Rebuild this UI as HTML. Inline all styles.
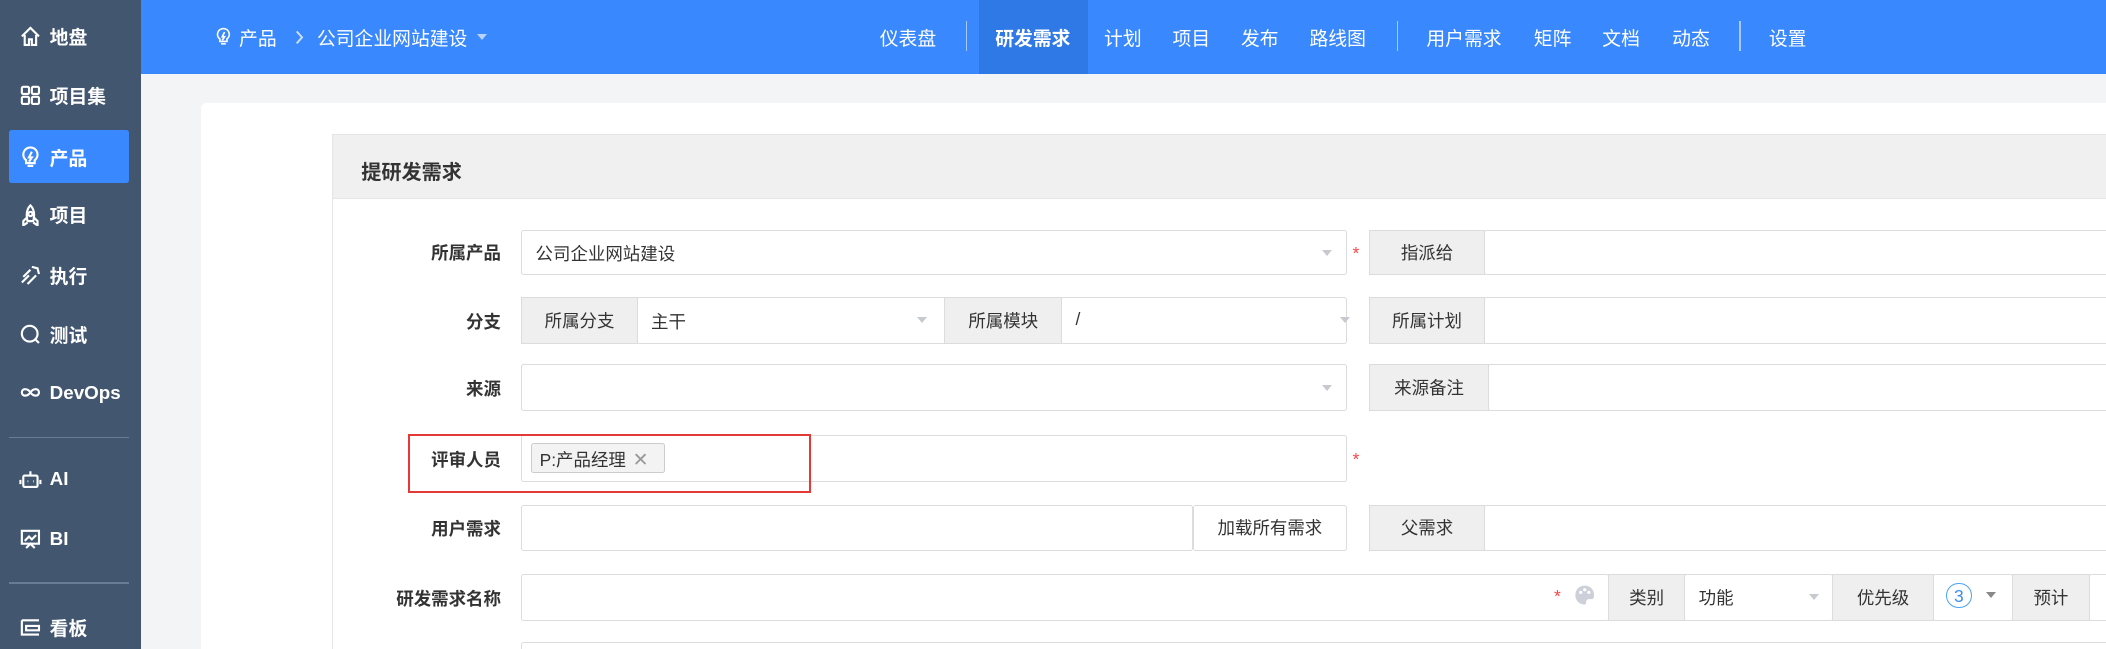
<!DOCTYPE html>
<html><head><meta charset="utf-8"><style>
html,body{margin:0;padding:0;overflow:hidden;width:2106px;height:649px;background:#f3f4f6}
#w{position:absolute;left:0;top:0;width:1568px;height:483px;zoom:1.3431;font-family:"Liberation Sans","Noto Sans CJK SC",sans-serif;font-size:13px;color:#333;overflow:hidden;background:#f3f4f6}
.a{position:absolute;box-sizing:border-box}
.side{left:0;top:0;width:105px;height:483px;background:#425670}
.si{position:absolute;left:14px;color:#fff;font-size:14px;font-weight:bold;display:flex;align-items:center;gap:6px}
.si svg{width:17px;height:17px;stroke:#fff;fill:none;stroke-width:1.5}
.top{left:105px;top:0;width:1463px;height:55px;background:#3a88fd}
.nav{position:absolute;top:18px;color:#fff;font-size:14px}
.sep{position:absolute;top:16px;width:1px;height:22px;background:rgba(255,255,255,.55)}
.inp{background:#fff;border:1px solid #dcdcdc;border-radius:2px}
.ad{background:#efefef;border:1px solid #dcdcdc;display:flex;align-items:center;justify-content:center;color:#333}
.lbl{position:absolute;width:120px;text-align:right;left:253px;font-weight:bold;color:#333}
.car{position:absolute;width:0;height:0;border-left:4px solid transparent;border-right:4px solid transparent;border-top:5px solid #c6c9ce}
.star{position:absolute;color:#f44;font-size:13px}
.t{position:absolute;top:8px;left:10px}
</style></head><body><div id="w">
<div class="a side">
 <div class="si" style="top:17px"><svg viewBox="0 0 16 16"><path d="M2 8L8 2l6 6M4 7v7h3v-4h2v4h3V7"/></svg>地盘</div>
 <div class="si" style="top:61px"><svg viewBox="0 0 16 16"><rect x="2" y="2" width="5" height="5" rx="1"/><rect x="9" y="2" width="5" height="5" rx="1"/><rect x="2" y="9" width="5" height="5" rx="1"/><rect x="9" y="9" width="5" height="5" rx="1"/></svg>项目集</div>
 <div class="a" style="left:7px;top:97px;width:89px;height:39px;background:#3a88fd;border-radius:2px"></div>
 <div class="si" style="top:107px"><svg viewBox="0 0 16 16"><path d="M8 1a5 5 0 0 0-3 9v2h6v-2a5 5 0 0 0-3-9zM6 14h4M9 4L7 8h2l-2 3"/></svg>产品</div>
 <div class="si" style="top:150px"><svg viewBox="0 0 16 16"><path d="M8 1c3 3 3 7 2 11H6C5 8 5 4 8 1zM6 9l-3 3v3l3-2M10 9l3 3v3l-3-2"/><circle cx="8" cy="7" r="1.5"/></svg>项目</div>
 <div class="si" style="top:195px"><svg viewBox="0 0 16 16"><path d="M2 13l5-5M3 9l5-5M6 14l6-6M9 2l4 1 1 4"/></svg>执行</div>
 <div class="si" style="top:239px"><svg viewBox="0 0 16 16"><circle cx="7.5" cy="7.5" r="5.5"/><path d="M11 11l3 3"/></svg>测试</div>
 <div class="si" style="top:284px"><svg viewBox="0 0 16 16"><path d="M8 8c-2-3-6-3-6 0s4 3 6 0 6-3 6 0-4 3-6 0"/></svg>DevOps</div>
 <div class="a" style="left:7px;top:325px;width:89px;height:1px;background:#6a7c93"></div>
 <div class="si" style="top:348px"><svg viewBox="0 0 16 16"><rect x="3" y="6" width="10" height="8" rx="1"/><path d="M8 3v3M6 10h.5M10 10h.5M1 9v3M15 9v3"/></svg>AI</div>
 <div class="si" style="top:393px"><svg viewBox="0 0 16 16"><path d="M2 2h12v9H2zM5 14l3-3 3 3M4 9l3-3 2 2 3-3"/></svg>BI</div>
 <div class="a" style="left:7px;top:433px;width:89px;height:2px;background:#6a7c93"></div>
 <div class="si" style="top:457px"><svg viewBox="0 0 16 16"><path d="M2 3h12M2 3v10h5M5 7h9v3H5zM5 13h9"/></svg>看板</div>
</div>
<div class="a top">
 <svg class="a" style="left:54px;top:19px" width="14" height="16" viewBox="0 0 16 16" fill="none" stroke="#fff" stroke-width="1.4"><path d="M8 1a5 5 0 0 0-3 9v2h6v-2a5 5 0 0 0-3-9zM6 14h4M9 4L7 8h2l-2 3"/></svg>
 <div class="nav" style="left:73px">产品</div>
 <svg class="a" style="left:114px;top:22px" width="8" height="11" viewBox="0 0 8 11" fill="none" stroke="#cfe0ff" stroke-width="1.4"><path d="M2 1l4 4.5L2 10"/></svg>
 <div class="nav" style="left:131px">公司企业网站建设</div>
 <div class="car" style="left:250px;top:25px;border-top-color:#b9d3ff"></div>
 <div class="nav" style="left:550px">仪表盘</div>
 <div class="sep" style="left:614px"></div>
 <div class="a" style="left:624px;top:0;width:81px;height:55px;background:#2f79e6"></div>
 <div class="nav" style="left:636px;font-weight:bold">研发需求</div>
 <div class="nav" style="left:717px">计划</div>
 <div class="nav" style="left:768px">项目</div>
 <div class="nav" style="left:819px">发布</div>
 <div class="nav" style="left:870px">路线图</div>
 <div class="sep" style="left:935px"></div>
 <div class="nav" style="left:957px">用户需求</div>
 <div class="nav" style="left:1037px">矩阵</div>
 <div class="nav" style="left:1088px">文档</div>
 <div class="nav" style="left:1140px">动态</div>
 <div class="sep" style="left:1190px"></div>
 <div class="nav" style="left:1212px">设置</div>
</div>
<div class="a" style="left:150px;top:77px;width:1430px;height:420px;background:#fff;border-radius:4px 0 0 0"></div>
<div class="a" style="left:247px;top:100px;width:1330px;height:400px;border:1px solid #e5e5e5;background:#fff"></div>
<div class="a" style="left:247px;top:100px;width:1330px;height:48px;background:#f0f0f0;border:1px solid #e5e5e5"></div>
<div class="a" style="left:269px;top:116px;font-size:15px;font-weight:bold">提研发需求</div>

<div class="lbl" style="top:179px">所属产品</div>
<div class="a inp" style="left:388px;top:171px;width:615px;height:34px"><span class="t">公司企业网站建设</span></div>
<div class="car" style="left:984px;top:186px"></div>
<div class="star" style="left:1007px;top:181px">*</div>
<div class="a ad" style="left:1019px;top:171px;width:87px;height:34px">指派给</div>
<div class="a inp" style="left:1105px;top:171px;width:480px;height:34px"></div>

<div class="lbl" style="top:230px">分支</div>
<div class="a ad" style="left:388px;top:221px;width:87px;height:35px">所属分支</div>
<div class="a inp" style="left:474px;top:221px;width:230px;height:35px"><span class="t">主干</span></div>
<div class="car" style="left:683px;top:236px"></div>
<div class="a ad" style="left:703px;top:221px;width:88px;height:35px">所属模块</div>
<div class="a inp" style="left:790px;top:221px;width:213px;height:35px"><span class="t">/</span></div>
<div class="car" style="left:998px;top:236px"></div>
<div class="a ad" style="left:1019px;top:221px;width:87px;height:35px">所属计划</div>
<div class="a inp" style="left:1105px;top:221px;width:480px;height:35px"></div>

<div class="lbl" style="top:280px">来源</div>
<div class="a inp" style="left:388px;top:271px;width:615px;height:35px"></div>
<div class="car" style="left:984px;top:287px"></div>
<div class="a ad" style="left:1019px;top:271px;width:90px;height:35px">来源备注</div>
<div class="a inp" style="left:1108px;top:271px;width:480px;height:35px"></div>

<div class="lbl" style="top:333px">评审人员</div>
<div class="a inp" style="left:388px;top:324px;width:615px;height:35px"></div>
<div class="a" style="left:395px;top:330px;width:100px;height:22px;background:#f3f3f3;border:1px solid #ccc;border-radius:2px;font-size:13px;padding:2px 0 0 6px">P:产品经理<span style="color:#999;margin-left:5px;font-size:14px">✕</span></div>
<div class="star" style="left:1007px;top:334px">*</div>
<div class="a" style="left:304px;top:323px;width:300px;height:44px;border:2px solid #e53935"></div>

<div class="lbl" style="top:384px">用户需求</div>
<div class="a inp" style="left:388px;top:376px;width:500px;height:34px"></div>
<div class="a inp" style="left:888px;top:376px;width:115px;height:34px;display:flex;align-items:center;justify-content:center">加载所有需求</div>
<div class="a ad" style="left:1019px;top:376px;width:87px;height:34px">父需求</div>
<div class="a inp" style="left:1105px;top:376px;width:480px;height:34px"></div>

<div class="lbl" style="top:436px">研发需求名称</div>
<div class="a inp" style="left:388px;top:427px;width:810px;height:35px"></div>
<div class="star" style="left:1157px;top:436px">*</div>
<svg class="a" style="left:1172px;top:434px" width="16" height="18" viewBox="0 0 16 16"><path d="M8 1C4 1 1 4 1 8s3 7 7 7c1 0 1-1 1-2s1-2 2-2h2c2 0 2-2 2-3 0-4-3-7-7-7z" fill="#cdd0d8"/><circle cx="5" cy="6" r="1.2" fill="#fff"/><circle cx="8" cy="4" r="1.2" fill="#fff"/><circle cx="11" cy="6" r="1.2" fill="#fff"/></svg>
<div class="a ad" style="left:1197px;top:427px;width:58px;height:35px">类别</div>
<div class="a inp" style="left:1254px;top:427px;width:111px;height:35px"><span class="t">功能</span></div>
<div class="car" style="left:1347px;top:442px"></div>
<div class="a ad" style="left:1364px;top:427px;width:76px;height:35px">优先级</div>
<div class="a inp" style="left:1439px;top:427px;width:60px;height:35px"></div>
<div class="a" style="left:1449px;top:434px;width:19px;height:19px;border:1px solid #4aa3f5;border-radius:50%;color:#3a8ef0;text-align:center;line-height:19px;font-size:13px">3</div>
<div class="car" style="left:1479px;top:441px;border-top-color:#888"></div>
<div class="a ad" style="left:1498px;top:427px;width:58px;height:35px">预计</div>
<div class="a inp" style="left:1555px;top:427px;width:40px;height:35px"></div>

<div class="a inp" style="left:388px;top:478px;width:1200px;height:20px"></div>
</div></body></html>
